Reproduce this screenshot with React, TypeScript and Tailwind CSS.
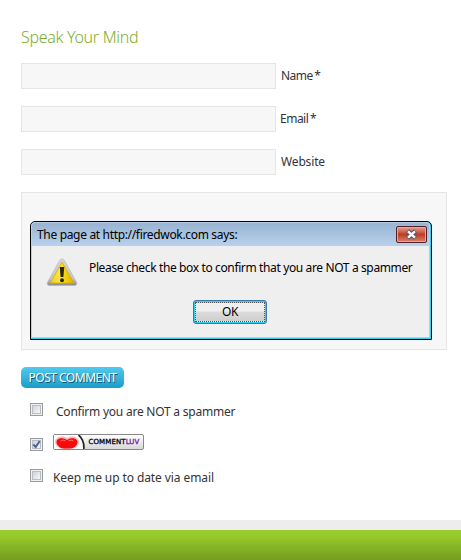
import React from "react";

function Field({ label, className }: { label: string; className: string }) {
  return (
    <div className="mb-[17px] flex h-[26px] items-center">
      <div className="h-[26px] w-[255px] shrink-0 border border-[#e5e5e5] bg-[#f7f7f7]" />
      <span className={`whitespace-pre text-[12px] leading-4 ${className}`}>{label}</span>
    </div>
  );
}

function Checkbox({ checked = false }: { checked?: boolean }) {
  return (
    <div className="flex h-[13px] w-[13px] shrink-0 border border-[#9b9c9d] bg-[#f0f0f0] p-px">
      <div className="h-[9px] w-[9px] border border-[#b9bec5] bg-linear-to-br from-[#cfd3d8] to-[#f8f8f8]">
        {checked && (
          <svg className="-ml-px -mt-px block" width="9" height="9" viewBox="0 0 9 9" fill="none" stroke="#4c62a6" strokeWidth="2">
            <path d="M1.3 4.3 3.6 7 7.8 1" />
          </svg>
        )}
      </div>
    </div>
  );
}

function Warning() {
  return (
    <svg className="shrink-0" width="32" height="30" viewBox="0 0 32 30">
      <defs>
        <linearGradient id="rim" x2="0" y2="1">
          <stop stopColor="#d6d8da" />
          <stop offset=".75" stopColor="#c4c7c9" />
          <stop offset="1" stopColor="#85898b" />
        </linearGradient>
        <linearGradient id="gold" x2="1" y2="0">
          <stop stopColor="#f0c428" />
          <stop offset=".4" stopColor="#ffe63b" />
          <stop offset=".52" stopColor="#f9dc16" />
          <stop offset="1" stopColor="#dfae00" />
        </linearGradient>
      </defs>
      <path d="M16 1c1.300 0 2 .7 2.800 2.200l11.600 20.800c1 2 .2 3.500-1.900 3.500h-25c-2.100 0-2.900-1.500-1.900-3.500L13.200 3.200C14 1.700 14.700 1 16 1Z" fill="url(#rim)" stroke="#b4b7b9" strokeWidth=".7" />
      <path d="M16 4 28 25H4Z" fill="url(#gold)" stroke="#d7a600" strokeWidth=".7" strokeLinejoin="round" />
      <path d="M13.800 9h4.400l-.8 10h-2.800Z" fill="#242414" />
      <circle cx="16" cy="22.300" r="2" fill="#242414" />
    </svg>
  );
}

function Dialog() {
  return (
    <div className="h-[119px] w-[402px] rounded-t-[5px] border border-black bg-[#39cce9] pb-px pr-px">
      <div className="flex h-full flex-col rounded-t-[4px] border border-[#b5cee9] bg-[#efefef]">
        <div className="flex h-[23px] shrink-0 justify-between rounded-t-[3px] bg-linear-to-b from-[#98b4d2] to-[#b9d1ec] pl-[5px] pr-[2px]">
          <span className="mt-[4px] whitespace-pre text-[12px] leading-4 tracking-[-0.33px] text-black">The page at http://firedwok.com says:</span>
          <div className="mt-[3px] flex h-[17px] w-[31px] items-center justify-center rounded-[2px] border border-[#54202a] bg-linear-to-b from-[#e7a196] from-0% via-[#bd3b22] via-50% to-[#d88168] shadow-[inset_0_0_0_1px_#e6a69d]">
            <svg width="13" height="11" viewBox="0 0 13 11">
              <path d="m2.500 2 8 7m0-7-8 7" stroke="#555967" strokeWidth="4.400" />
              <path d="m3 2.300 7 6.400m0-6.400-7 6.400" stroke="#fff" strokeWidth="2.300" />
            </svg>
          </div>
        </div>
        <div className="flex h-[54px] pl-[14px] pt-[12px]">
          <Warning />
          <span className="ml-[11px] mt-[2px] whitespace-pre text-[12px] leading-4 tracking-[-0.37px] text-black">Please check the box to confirm that you are NOT a spammer</span>
        </div>
        <div className="ml-[161px] flex h-[24px] w-[74px] rounded-[3px] border border-[#347eaf] bg-[#32cdf0] p-px">
          <div className="flex flex-1 items-center justify-center border border-dotted border-[#555] bg-linear-to-b from-[#efefef] from-45% via-[#dcdcdc] via-50% to-[#cecece] text-[12px] leading-4 tracking-[-0.3px] text-black">OK</div>
        </div>
      </div>
    </div>
  );
}

function CommentLuv() {
  return (
    <div className="flex h-[16px] w-[91px] overflow-hidden rounded-[2px] border border-[#888] bg-linear-to-b from-white to-[#d8d8d8]">
      <svg className="shrink-0" width="32" height="14" viewBox="0 0 32 14">
        <path d="M0 0h25q6 5 5 14H0Z" fill="#fff" />
        <path d="M24.500 0q6 5 5.300 14" fill="none" stroke="#222" strokeWidth="1.700" />
        <path d="M9.500 14C4 13.500 1 10 1 7c0-5 7-7 12-4 5-3 12-1 12 4 0 3-3 6.500-8.500 7Z" fill="#ffb9b9" />
        <path d="M10 13.500C5 13 2.500 9.500 2.500 7c0-4 6.500-5.200 10.500-2 4-3.200 10.500-2 10.500 2 0 2.500-2.500 6-7.500 6.500Z" fill="#f50b0b" />
        <path d="M6.500 6q2.500-2 5 0m3 0q2.500-2 5 0" fill="none" stroke="#ff6c6c" />
      </svg>
      <span className="ml-[2.500px] whitespace-pre font-['DejaVu_Sans',sans-serif] text-[7px] leading-[15px] tracking-[0.1px] text-black [-webkit-text-stroke:0.3px]">COMMENT<span className="text-[#7613a5]">LUV</span></span>
    </div>
  );
}

export default function App() {
  return (
    <div className="flex h-[560px] w-[461px] flex-col overflow-hidden bg-white font-['Noto_Sans',sans-serif] text-[#333]">
      <main className="h-[520px] shrink-0 pl-[21px] pt-[25px]">
        <h2 className="mb-[14px] h-[24px] whitespace-pre text-[16px] font-light leading-6 tracking-[-0.3px] text-[#7dad2b]">Speak Your Mind</h2>
        <Field label="Name *" className="ml-[5px] tracking-[-0.55px] [word-spacing:-1px]" />
        <Field label="Email *" className="ml-[4px] tracking-[-0.5px] [word-spacing:-1px]" />
        <Field label="Website" className="ml-[5px] tracking-[-0.15px]" />
        <div className="mb-[17px] h-[158px] w-[426px] border border-[#e5e5e5] bg-[#f7f7f7] pl-[8px] pt-[28px]">
          <Dialog />
        </div>
        <button className="flex h-[21px] w-[103px] items-center justify-center whitespace-pre rounded-[5px] bg-linear-to-b from-[#50caed] to-[#169dca] text-[12px] leading-4 tracking-[-0.5px] text-white [text-shadow:1px_1px_0_#165a70]">POST COMMENT</button>
        <div className="mt-[15px] flex h-[15px] pl-[9px]">
          <Checkbox />
          <span className="ml-[13px] mt-px whitespace-pre text-[12px] leading-4 tracking-[-0.23px]">Confirm you are NOT a spammer</span>
        </div>
        <div className="mt-[16px] flex h-[19px] pl-[9px]">
          <div className="mt-[4px]"><Checkbox checked /></div>
          <div className="ml-[10px]"><CommentLuv /></div>
        </div>
        <div className="mt-[16px] flex h-[16px] pl-[9px]">
          <Checkbox />
          <span className="ml-[10px] mt-px whitespace-pre text-[12px] leading-4 tracking-[-0.09px]">Keep me up to date via email</span>
        </div>
      </main>
      <div className="h-[10px] shrink-0 bg-[#ededed]" />
      <footer className="h-[30px] shrink-0 bg-linear-to-b from-[#99cc2b] from-15% to-[#759e20]" />
    </div>
  );
}
